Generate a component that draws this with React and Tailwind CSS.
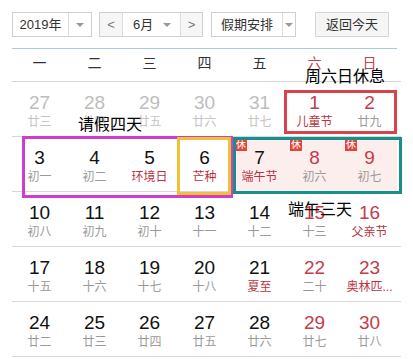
import React from 'react'

const RED = 'text-[#c43c4a]'

const weeks = [
  [
    { d: 27, l: '廿三', o: true }, { d: 28, l: '廿四', o: true }, { d: 29, l: '廿五', o: true },
    { d: 30, l: '廿六', o: true }, { d: 31, l: '廿七', o: true },
    { d: 1, l: '儿童节', we: true, lr: true }, { d: 2, l: '廿九', we: true },
  ],
  [
    { d: 3, l: '初一' }, { d: 4, l: '初二' }, { d: 5, l: '环境日', lr: true }, { d: 6, l: '芒种', lr: true },
    { d: 7, l: '端午节', lr: true, rest: true }, { d: 8, l: '初六', we: true, rest: true },
    { d: 9, l: '初七', we: true, rest: true },
  ],
  [
    { d: 10, l: '初八' }, { d: 11, l: '初九' }, { d: 12, l: '初十' }, { d: 13, l: '十一' },
    { d: 14, l: '十二' }, { d: 15, l: '十三', we: true }, { d: 16, l: '父亲节', we: true, lr: true },
  ],
  [
    { d: 17, l: '十五' }, { d: 18, l: '十六' }, { d: 19, l: '十七' }, { d: 20, l: '十八' },
    { d: 21, l: '夏至', lr: true }, { d: 22, l: '二十', we: true }, { d: 23, l: '奥林匹...', we: true, lr: true },
  ],
  [
    { d: 24, l: '廿二' }, { d: 25, l: '廿三' }, { d: 26, l: '廿四' }, { d: 27, l: '廿五' },
    { d: 28, l: '廿六' }, { d: 29, l: '廿七', we: true }, { d: 30, l: '廿八', we: true },
  ],
]

const Arrow = () => (
  <span className="w-0 h-0 border-l-[4px] border-r-[4px] border-t-[4px] border-l-transparent border-r-transparent border-t-[#999]" />
)

const Cell = ({ c }) => {
  const num = c.o ? 'text-[#bdbdbd]' : c.we ? RED : 'text-[#111]'
  const lun = c.o ? 'text-[#c4c4c4]' : c.lr ? 'text-[#b8333f]' : 'text-[#9a9a9a]'
  return (
    <div className={`relative flex flex-col items-center pt-[10px] ${c.rest ? 'bg-[#fdeeee]' : ''}`}>
      {c.rest && (
        <span className="absolute left-[3px] top-[2px] w-[12px] h-[12px] bg-[#e0463c] text-white text-[10px] leading-[12px] text-center">休</span>
      )}
      <span className={`h-[22px] leading-[22px] text-[19px] ${num}`}>{c.d}</span>
      <span className={`h-[17px] leading-[17px] text-[12px] whitespace-nowrap ${lun}`}>{c.l}</span>
    </div>
  )
}

export default function App() {
  return (
    <div className="relative w-[413px] h-[359px] bg-white overflow-hidden font-['Liberation_Sans','Noto_Sans_CJK_SC',sans-serif]">
      <div className="px-3 pt-3">
        <div className="flex items-center h-[25px] text-[13px] text-[#333] whitespace-nowrap">
          <div className="flex items-center h-full w-[80px] border border-[#cfcfcf]">
            <span className="w-[55px] text-center">2019年</span>
            <span className="flex items-center justify-center h-full flex-1 border-l border-[#ddd]"><Arrow /></span>
          </div>
          <div className="flex items-center h-full w-[104px] ml-[7px] border border-[#cfcfcf]">
            <span className="flex items-center justify-center h-full w-[23px] bg-[#f6f6f6] text-[#777] border-r border-[#ddd]">&lt;</span>
            <span className="flex items-center justify-between h-full flex-1 pl-[10px] pr-[9px]"><span>6月</span><Arrow /></span>
            <span className="flex items-center justify-center h-full w-[22px] bg-[#f6f6f6] text-[#777] border-l border-[#ddd]">&gt;</span>
          </div>
          <div className="flex items-center h-full w-[85px] ml-[8px] border border-[#cfcfcf]">
            <span className="w-[70px] text-center">假期安排</span>
            <span className="flex items-center justify-center h-full flex-1 border-l border-[#ddd]"><Arrow /></span>
          </div>
          <div className="flex items-center justify-center h-full w-[74px] ml-[19px] border border-[#d6d6d6] bg-[#f5f5f5]">返回今天</div>
        </div>
        <div className="mt-[11px] w-[385px] border-t border-[#a8cbe0]" />
        <div className="grid grid-cols-[repeat(7,55px)] h-[33px] border-b border-[#d4d4d4] text-[14px] text-[#333]">
          {['一', '二', '三', '四', '五', '六', '日'].map((w, i) => (
            <div key={i} className={`text-center pt-[4px] ${i > 4 ? 'text-[#c4404e]' : ''}`}>{w}</div>
          ))}
        </div>
        {weeks.map((row, r) => (
          <div key={r} className="grid grid-cols-[repeat(7,55px)] h-[55px] border-b border-[#d8d8d8]">
            {row.map((c, i) => <Cell key={i} c={c} />)}
          </div>
        ))}
      </div>

      <div className="absolute left-[284px] top-[90px] w-[113px] h-[44px] border-[3px] border-[#d9424c]" />
      <div className="absolute left-[22px] top-[136px] w-[211px] h-[62px] border-[3px] border-[#d03dcc]" />
      <div className="absolute left-[177px] top-[137px] w-[54px] h-[58px] border-[3px] border-[#f0c132]" />
      <div className="absolute left-[233px] top-[137px] w-[169px] h-[57px] border-[3px] border-[#178f8c]" />

      <span className="absolute left-[305px] top-[65px] text-[16px] leading-[20px] text-black font-['Noto_Sans_CJK_SC',sans-serif]">周六日休息</span>
      <span className="absolute left-[78px] top-[113px] text-[16px] leading-[20px] text-black font-['Noto_Sans_CJK_SC',sans-serif]">请假四天</span>
      <span className="absolute left-[288px] top-[198px] text-[16px] leading-[20px] text-black font-['Noto_Sans_CJK_SC',sans-serif]">端午三天</span>
    </div>
  )
}
